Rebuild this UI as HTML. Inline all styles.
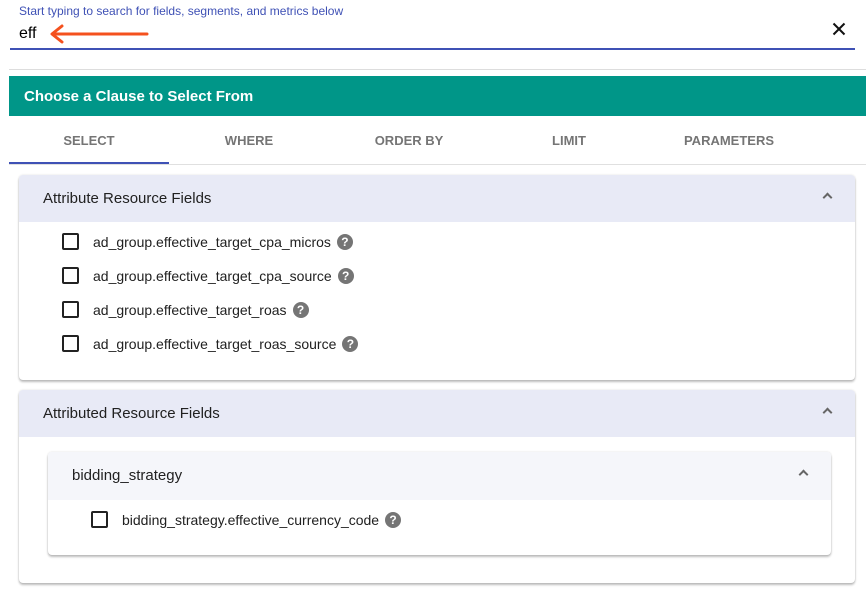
<!DOCTYPE html>
<html><head><meta charset="utf-8"><style>
*{box-sizing:border-box;margin:0;padding:0}
body{width:866px;height:596px;background:#fff;font-family:"Liberation Sans",Arial,sans-serif;position:relative;overflow:hidden;color:#212121}
.abs{position:absolute}
.lbl{left:19px;top:4px;font-size:12px;color:#3f51b5}
.val{left:19px;top:25px;font-size:16px;color:#000}
.ul{left:10px;top:48px;width:845px;height:2px;background:#3f51b5}
.gl{left:9px;top:69px;width:857px;height:1px;background:#ddd}
.bar{left:9px;top:76px;width:857px;height:40px;background:#009688;color:#fff;font-size:15px;font-weight:bold;padding:12px 0 0 15px}
.tab{top:133px;width:160px;text-align:center;font-size:13px;font-weight:bold;color:#757575}
.ind{left:9px;top:162px;width:160px;height:2px;background:#3f51b5}
.tl{left:9px;top:164px;width:857px;height:1px;background:#e0e0e0}
.panel{background:#fff;border-radius:4px;box-shadow:0 2px 2px rgba(0,0,0,.25),0 0 2px rgba(0,0,0,.12)}
.hdr{background:#e8eaf6;height:47px;border-radius:4px 4px 0 0;font-size:15px;padding:15px 0 0 24px;position:relative}
.chev{position:absolute;right:24px;top:19px;width:7px;height:7px;border-left:2px solid #666;border-top:2px solid #666;transform:rotate(45deg)}
.row{position:absolute;font-size:14px;display:flex;align-items:center}
.cb{width:17px;height:17px;border:2px solid #222;border-radius:2px;margin-right:14px}
.q{display:inline-block;width:16px;height:16px;border-radius:50%;background:#757575;color:#fff;font-size:12px;font-weight:bold;text-align:center;line-height:16px;margin-left:6px}
</style></head><body>
<div class="abs lbl">Start typing to search for fields, segments, and metrics below</div>
<div class="abs val">eff</div>
<svg class="abs" style="left:48px;top:24px" width="102" height="20"><path d="M99 10H5M14 2L4 10L14 18" stroke="#f4511e" stroke-width="3" fill="none" stroke-linecap="round" stroke-linejoin="round"/></svg>
<svg class="abs" style="left:832px;top:22px" width="14" height="14"><path d="M1.5 1.5L12.5 12.5M12.5 1.5L1.5 12.5" stroke="#111" stroke-width="2"/></svg>
<div class="abs ul"></div>
<div class="abs gl"></div>
<div class="abs bar">Choose a Clause to Select From</div>
<div class="abs tab" style="left:9px">SELECT</div>
<div class="abs tab" style="left:169px">WHERE</div>
<div class="abs tab" style="left:329px">ORDER BY</div>
<div class="abs tab" style="left:489px">LIMIT</div>
<div class="abs tab" style="left:649px">PARAMETERS</div>
<div class="abs ind"></div>
<div class="abs tl"></div>

<div class="abs panel" style="left:19px;top:175px;width:836px;height:205px">
<div class="hdr">Attribute Resource Fields<div class="chev"></div></div>
<div class="row" style="left:43px;top:58px"><div class="cb"></div>ad_group.effective_target_cpa_micros<span class="q">?</span></div>
<div class="row" style="left:43px;top:92px"><div class="cb"></div>ad_group.effective_target_cpa_source<span class="q">?</span></div>
<div class="row" style="left:43px;top:126px"><div class="cb"></div>ad_group.effective_target_roas<span class="q">?</span></div>
<div class="row" style="left:43px;top:160px"><div class="cb"></div>ad_group.effective_target_roas_source<span class="q">?</span></div>
</div>

<div class="abs panel" style="left:19px;top:390px;width:836px;height:193px">
<div class="hdr">Attributed Resource Fields<div class="chev"></div></div>
<div class="abs panel" style="left:29px;top:62px;width:783px;height:103px">
<div class="hdr" style="background:#f5f6fa;height:48px">bidding_strategy<div class="chev" style="right:24px"></div></div>
<div class="row" style="left:43px;top:59px"><div class="cb"></div>bidding_strategy.effective_currency_code<span class="q">?</span></div>
</div>
</div>
</body></html>
